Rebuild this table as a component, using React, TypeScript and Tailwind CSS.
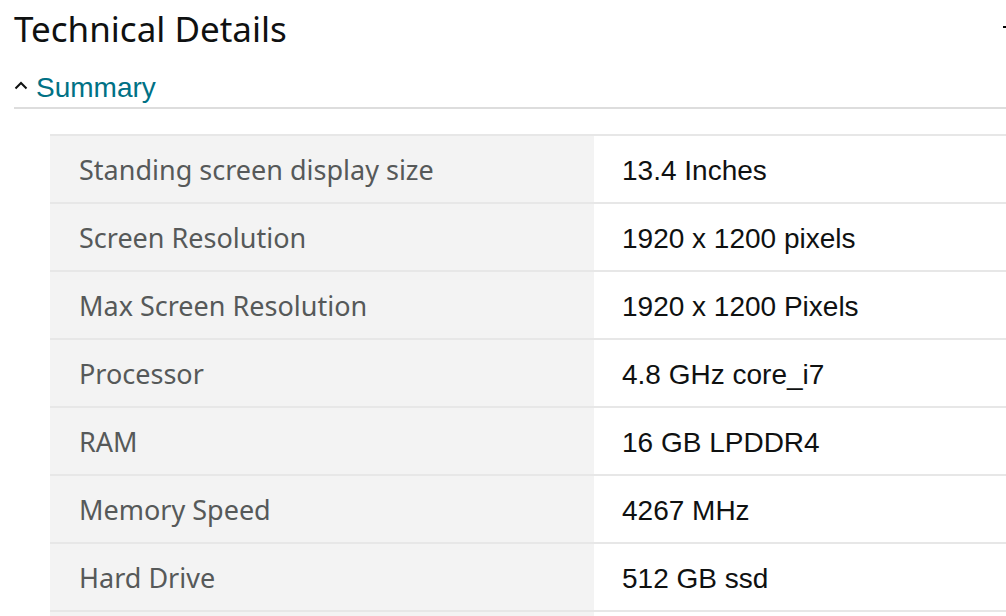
import React from "react";

const rows: [string, string][] = [
  ["Standing screen display size", "13.4 Inches"],
  ["Screen Resolution", "1920 x 1200 pixels"],
  ["Max Screen Resolution", "1920 x 1200 Pixels"],
  ["Processor", "4.8 GHz core_i7"],
  ["RAM", "16 GB LPDDR4"],
  ["Memory Speed", "4267 MHz"],
  ["Hard Drive", "512 GB ssd"],
  ["", ""],
];

export default function App() {
  return (
    <div className="w-[1006px] h-[616px] overflow-hidden bg-white relative">
      <div className="absolute left-[1003px] top-[26px] w-[3px] h-[2px] bg-black" />
      <div className="pl-[14px] pt-[9px]">
        <h1
          className="text-[35px] leading-[40px] text-[#0f1111] m-0"
          style={{ fontFamily: '"Noto Sans", "Open Sans", sans-serif' }}
        >
          Technical Details
        </h1>
        <div className="mt-[23px] flex items-center h-[32px]">
          <svg width="14" height="10" viewBox="0 0 14 10" className="mr-[8px] -mt-[6px]">
            <path d="M1.5 8.5 L7 3 L12.5 8.5" fill="none" stroke="#0f1111" strokeWidth="2" />
          </svg>
          <span
            className="text-[28px] leading-[32px] text-[#007185]"
            style={{ fontFamily: '"Liberation Sans", Arial, sans-serif' }}
          >
            Summary
          </span>
        </div>
        <div className="mt-[3px] h-[2px] bg-[#dddddd]" />
        <div className="ml-[36px] mt-[25px] border-t-2 border-[#e7e7e7]">
          {rows.map(([k, v], i) => (
            <div key={i} className="flex h-[68px] border-b-2 border-[#e7e7e7]">
              <div
                className="w-[544px] bg-[#f3f3f3] flex items-center pl-[29px] pt-[3px] text-[27px] text-[#565959]"
                style={{ fontFamily: '"Noto Sans", "Open Sans", sans-serif' }}
              >
                {k}
              </div>
              <div
                className="flex-1 flex items-center pl-[28px] pt-[3px] text-[28px] text-[#0f1111]"
                style={{ fontFamily: '"Liberation Sans", Arial, sans-serif' }}
              >
                {v}
              </div>
            </div>
          ))}
        </div>
      </div>
    </div>
  );
}
